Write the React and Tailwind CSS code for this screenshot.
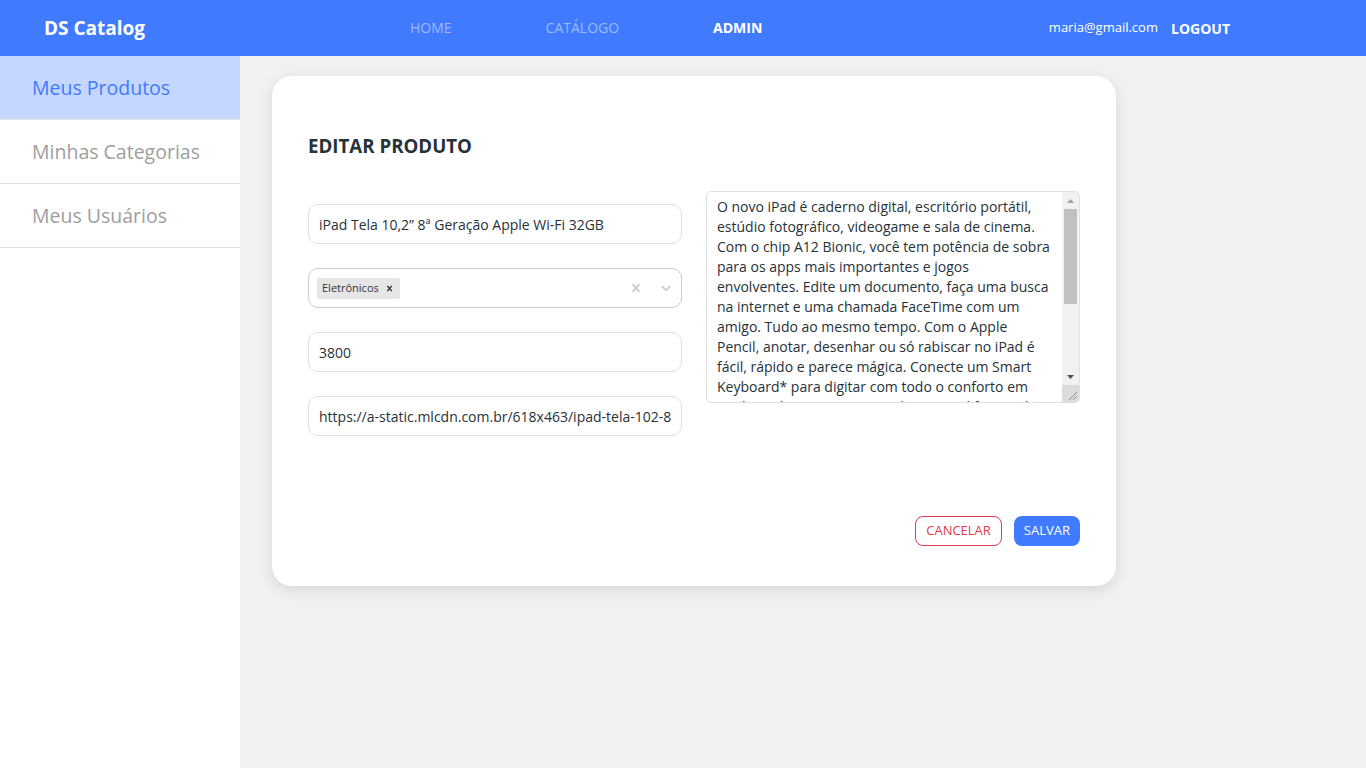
import React from 'react'

const description = 'O novo iPad é caderno digital, escritório portátil, estúdio fotográfico, videogame e sala de cinema. Com o chip A12 Bionic, você tem potência de sobra para os apps mais importantes e jogos envolventes. Edite um documento, faça uma busca na internet e uma chamada FaceTime com um amigo. Tudo ao mesmo tempo. Com o Apple Pencil, anotar, desenhar ou só rabiscar no iPad é fácil, rápido e parece mágica. Conecte um Smart Keyboard* para digitar com todo o conforto em qualquer lugar. E com o iPadOS, o iPad fica ainda mais versátil.'

function Cross({ size = 14, className = '' }) {
  return (
    <svg width={size} height={size} viewBox="0 0 20 20" className={className} fill="currentColor">
      <path d="M14.348 14.849c-0.469 0.469-1.229 0.469-1.697 0l-2.651-3.030-2.651 3.029c-0.469 0.469-1.229 0.469-1.697 0-0.469-0.469-0.469-1.229 0-1.697l2.758-3.15-2.759-3.152c-0.469-0.469-0.469-1.228 0-1.697s1.228-0.469 1.697 0l2.652 3.031 2.651-3.031c0.469-0.469 1.228-0.469 1.697 0s0.469 1.229 0 1.697l-2.758 3.152 2.758 3.15c0.469 0.469 0.469 1.229 0 1.698z" />
    </svg>
  )
}

function Chevron({ size = 20 }) {
  return (
    <svg width={size} height={size} viewBox="0 0 20 20" fill="currentColor">
      <path d="M4.516 7.548c0.436-0.446 1.043-0.481 1.576 0l3.908 3.747 3.908-3.747c0.533-0.481 1.141-0.446 1.574 0 0.436 0.445 0.408 1.197 0 1.615-0.406 0.418-4.695 4.502-4.695 4.502-0.217 0.223-0.502 0.335-0.787 0.335s-0.57-0.112-0.789-0.335c0 0-4.287-4.084-4.695-4.502s-0.436-1.17 0-1.615z" />
    </svg>
  )
}

// classic scrollbar look, drawn beside the textarea
function Scrollbar() {
  return (
    <div className="w-[17px] flex flex-col bg-[#F1F1F1] flex-shrink-0">
      <div className="h-[17px] flex items-center justify-center">
        <svg width="7" height="4" viewBox="0 0 7 4"><path d="M3.5 0L7 4H0z" fill="#A3A3A3" /></svg>
      </div>
      <div className="flex-1 px-[2px]">
        <div className="h-[95px] bg-[#C1C1C1]" />
      </div>
      <div className="h-[17px] flex items-center justify-center">
        <svg width="7" height="4" viewBox="0 0 7 4"><path d="M0 0H7L3.5 4z" fill="#505050" /></svg>
      </div>
      <div className="h-[17px] bg-[#DCDCDC] flex items-end justify-end p-[2px]">
        <svg width="9" height="9" viewBox="0 0 9 9">
          <path d="M9 1L1 9M9 5L5 9" stroke="#8A8A8A" strokeWidth="1" />
        </svg>
      </div>
    </div>
  )
}

export default function App() {
  const font = { fontFamily: '"Open Sans", "Noto Sans", sans-serif' }

  return (
    <div className="min-h-screen flex flex-col bg-[#F2F2F2]" style={font}>
      {/* Navbar */}
      <nav className="h-14 bg-[#407BFF] flex items-center text-white flex-shrink-0">
        <span className="w-[410px] pl-[44px] text-[19px] font-bold leading-none">DS Catalog</span>
        <div className="flex items-center gap-[94px] text-[14px] leading-none">
          <span className="text-[#9EB9FF]">HOME</span>
          <span className="text-[#9EB9FF]">CATÁLOGO</span>
          <span className="font-bold text-white">ADMIN</span>
        </div>
        <div className="ml-auto mr-[136px] flex items-center gap-[13px]">
          <span className="text-[13px]">maria@gmail.com</span>
          <span className="text-[14px] font-bold">LOGOUT</span>
        </div>
      </nav>

      <div className="flex flex-1">
        {/* Sidebar */}
        <aside className="w-[240px] bg-white flex-shrink-0">
          <div className="h-16 flex items-center pl-8 text-[19.5px] text-[#407BFF] bg-[#C6D7FF] border-b border-[#E1E1E1]">Meus Produtos</div>
          <div className="h-16 flex items-center pl-8 text-[19.5px] text-[#9E9E9E] border-b border-[#E1E1E1]">Minhas Categorias</div>
          <div className="h-16 flex items-center pl-8 text-[19.5px] text-[#9E9E9E] border-b border-[#E1E1E1]">Meus Usuários</div>
        </aside>

        {/* Content */}
        <main className="flex-1 pt-5 pl-8">
          <div className="w-[844px] bg-white rounded-[20px] shadow-[0_4px_16px_rgba(0,0,0,0.12)] px-9 pt-[56px] pb-10">
            <h1 className="text-[18.7px] font-bold text-[#263238] leading-[27px]">EDITAR PRODUTO</h1>

            <div className="grid grid-cols-2 gap-6 mt-[32px]">
              <div className="flex flex-col gap-6 pt-[13px]">
                <input
                  readOnly
                  value="iPad Tela 10,2” 8ª Geração Apple Wi-Fi 32GB"
                  className="h-10 px-[10px] rounded-[10px] border border-[#E1E1E1] text-[14px] text-[#263238] outline-none"
                  style={font}
                />
                <div className="h-10 rounded-[10px] border border-[#CCCCCC] flex items-center pl-2">
                  <div className="flex items-center bg-[#E6E6E6] rounded-[2px] h-[21px]">
                    <span className="text-[11px] text-[#333333] pl-[5px] pr-[3px]">Eletrônicos</span>
                    <span className="pl-[2px] pr-[5px] text-[#333333]"><Cross size={11} /></span>
                  </div>
                  <div className="ml-auto flex items-center text-[#CCCCCC]">
                    <span className="py-2 pr-[7px]"><Cross size={16} /></span>
                    <span className="py-2 pl-[7px] pr-[7px]"><Chevron size={16} /></span>
                  </div>
                </div>
                <input
                  readOnly
                  value="3800"
                  className="h-10 px-[10px] rounded-[10px] border border-[#E1E1E1] text-[14px] text-[#263238] outline-none"
                  style={font}
                />
                <input
                  readOnly
                  value="https://a-static.mlcdn.com.br/618x463/ipad-tela-102-8a-geracao-apple-wi-fi-32gb-prateado/magazineluiza/225317700/1a0d4b4f1b7d0a0a.jpg"
                  className="h-10 px-[10px] rounded-[10px] border border-[#E1E1E1] text-[14px] text-[#263238] outline-none"
                  style={font}
                />
              </div>
              <div className="h-[212px] flex rounded-[5px] border border-[#E1E1E1] overflow-hidden">
                <textarea
                  readOnly
                  value={description}
                  className="flex-1 h-full pl-[10px] pr-[10px] pt-[5px] pb-[7px] text-[14px] leading-[20px] text-[#263238] outline-none overflow-hidden resize-none"
                  style={font}
                />
                <Scrollbar />
              </div>
            </div>

            <div className="flex justify-end gap-3 mt-20">
              <button className="h-[30px] px-[10px] rounded-[8px] border border-[#DF3A4E] text-[#DF3A4E] text-[13px] bg-white">CANCELAR</button>
              <button className="h-[30px] px-[10px] rounded-[8px] bg-[#407BFF] text-white text-[13px]">SALVAR</button>
            </div>
          </div>
        </main>
      </div>
    </div>
  )
}
